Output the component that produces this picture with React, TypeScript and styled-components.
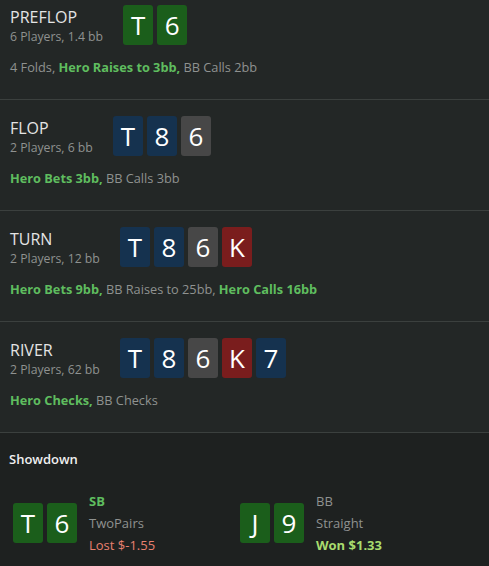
import React from "react";
import styled, { createGlobalStyle } from "styled-components";

const Global = createGlobalStyle`
  html, body { margin: 0; padding: 0; background: #232726; overflow: hidden; }
  body { font-family: "Open Sans", "Noto Sans", sans-serif; }
`;

const Page = styled.div`
  width: 489px;
  height: 566px;
  overflow: hidden;
  background: #232726;
  display: flex;
  flex-direction: column;
`;

const Streets = styled.div`
  margin-top: -11px;
  display: flex;
  flex-direction: column;
`;

const Street = styled.section`
  height: 111px;
  box-sizing: border-box;
  padding: 16px 10px 0 10px;
  border-bottom: 1px solid #3b403e;
`;

const Header = styled.div`
  display: flex;
  align-items: center;
  gap: 20px;
`;

const Titles = styled.div`
  display: flex;
  flex-direction: column;
`;

const Title = styled.div`
  color: #e4e4e4;
  font-size: 16px;
  line-height: 22px;
`;

const Sub = styled.div`
  color: #8f9290;
  font-size: 12.25px;
  line-height: 17px;
`;

const Cards = styled.div`
  display: flex;
  gap: 4px;
`;

type Suit = "g" | "b" | "k" | "r";
const suitColor: Record<Suit, string> = {
  g: "#1b5e1b",
  b: "#15324f",
  k: "#474747",
  r: "#7a1d1d",
};

const Card = styled.div<{ $suit: Suit }>`
  width: 30px;
  height: 40px;
  border-radius: 3px;
  background: ${(p) => suitColor[p.$suit]};
  color: #ffffff;
  font-size: 26px;
  line-height: 40px;
  text-align: center;
`;

const Actions = styled.div`
  margin-top: 14px;
  font-size: 12.75px;
  line-height: 17px;
  color: #8f9290;
`;

const Hero = styled.span`
  color: #5fbd5f;
  font-weight: 700;
`;

const Showdown = styled.section`
  flex: 1;
  background: #1e2120;
  padding: 17px 13px 0 13px;
`;

const ShowTitle = styled.div`
  color: #f0f0f0;
  font-size: 13px;
  line-height: 18px;
  font-weight: 600;
  margin-left: -4px;
`;

const Players = styled.div`
  margin-top: 22px;
  display: grid;
  grid-template-columns: 227px 1fr;
`;

const Player = styled.div`
  display: flex;
  align-items: center;
  gap: 12px;
`;

const Info = styled.div`
  display: flex;
  flex-direction: column;
  font-size: 13px;
  line-height: 22px;
`;

const Pos = styled.div<{ $hero?: boolean }>`
  color: ${(p) => (p.$hero ? "#5fbd5f" : "#8f9290")};
  font-weight: ${(p) => (p.$hero ? 700 : 400)};
`;

const Hand = styled.div`
  color: #8f9290;
`;

const Result = styled.div<{ $won?: boolean }>`
  color: ${(p) => (p.$won ? "#a8dc6e" : "#e8806f")};
  font-weight: ${(p) => (p.$won ? 700 : 400)};
`;

type Part = { t: string; hero?: boolean };
type StreetData = {
  name: string;
  sub: string;
  cards: [string, Suit][];
  actions: Part[];
};

const streets: StreetData[] = [
  {
    name: "PREFLOP",
    sub: "6 Players, 1.4 bb",
    cards: [
      ["T", "g"],
      ["6", "g"],
    ],
    actions: [
      { t: "4 Folds, " },
      { t: "Hero Raises to 3bb,", hero: true },
      { t: " BB Calls 2bb" },
    ],
  },
  {
    name: "FLOP",
    sub: "2 Players, 6 bb",
    cards: [
      ["T", "b"],
      ["8", "b"],
      ["6", "k"],
    ],
    actions: [{ t: "Hero Bets 3bb,", hero: true }, { t: " BB Calls 3bb" }],
  },
  {
    name: "TURN",
    sub: "2 Players, 12 bb",
    cards: [
      ["T", "b"],
      ["8", "b"],
      ["6", "k"],
      ["K", "r"],
    ],
    actions: [
      { t: "Hero Bets 9bb,", hero: true },
      { t: " BB Raises to 25bb, " },
      { t: "Hero Calls 16bb", hero: true },
    ],
  },
  {
    name: "RIVER",
    sub: "2 Players, 62 bb",
    cards: [
      ["T", "b"],
      ["8", "b"],
      ["6", "k"],
      ["K", "r"],
      ["7", "b"],
    ],
    actions: [{ t: "Hero Checks,", hero: true }, { t: " BB Checks" }],
  },
];

export default function App() {
  return (
    <Page>
      <Global />
      <Streets>
        {streets.map((s) => (
          <Street key={s.name}>
            <Header>
              <Titles>
                <Title>{s.name}</Title>
                <Sub>{s.sub}</Sub>
              </Titles>
              <Cards>
                {s.cards.map(([r, su], i) => (
                  <Card key={i} $suit={su}>
                    {r}
                  </Card>
                ))}
              </Cards>
            </Header>
            <Actions>
              {s.actions.map((a, i) =>
                a.hero ? <Hero key={i}>{a.t}</Hero> : <span key={i}>{a.t}</span>
              )}
            </Actions>
          </Street>
        ))}
      </Streets>
      <Showdown>
        <ShowTitle>Showdown</ShowTitle>
        <Players>
          <Player>
            <Cards>
              <Card $suit="g">T</Card>
              <Card $suit="g">6</Card>
            </Cards>
            <Info>
              <Pos $hero>SB</Pos>
              <Hand>TwoPairs</Hand>
              <Result>Lost $-1.55</Result>
            </Info>
          </Player>
          <Player>
            <Cards>
              <Card $suit="g">J</Card>
              <Card $suit="g">9</Card>
            </Cards>
            <Info>
              <Pos>BB</Pos>
              <Hand>Straight</Hand>
              <Result $won>Won $1.33</Result>
            </Info>
          </Player>
        </Players>
      </Showdown>
    </Page>
  );
}
